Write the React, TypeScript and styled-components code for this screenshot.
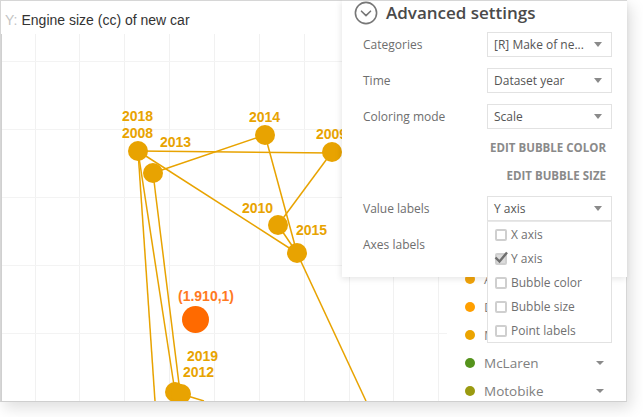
import React from "react";
import styled, { createGlobalStyle } from "styled-components";

const Global = createGlobalStyle`
  html, body { margin: 0; padding: 0; background: #fff; }
  body { width: 643px; height: 417px; overflow: hidden; font-family: "Open Sans", sans-serif; }
`;

const Card = styled.div`
  position: relative;
  box-sizing: border-box;
  width: 627px;
  height: 402px;
  display: flex;
  flex-direction: column;
  background: #fff;
  border-top: 1px solid #d6d6d6;
  border-left: 1px solid #d6d6d6;
  border-right: 1px solid #d6d6d6;
  border-bottom: 1px solid #cfcfcf;
  box-shadow: 4px 6px 14px rgba(0, 0, 0, 0.13);
`;

const AxisTitle = styled.div`
  height: 33px;
  display: flex;
  align-items: center;
  gap: 4px;
  padding: 4px 0 0 4px;
  box-sizing: border-box;
  font: 14px "Liberation Sans", Arial, sans-serif;
  color: #333;
`;

const AxisPrefix = styled.span`
  color: #c4c4c4;
`;

const ChartBody = styled.div`
  flex: 1;
  display: flex;
  min-height: 0;
  border-left: 1px solid #d0d0d0;
`;

const Plot = styled.svg`
  display: block;
  width: 445px;
  height: 367px;
  flex: none;
`;

const Legend = styled.div`
  flex: 1;
  display: flex;
  flex-direction: column;
  justify-content: flex-end;
  margin-bottom: -4px;
`;

const LegendRow = styled.div`
  height: 28px;
  display: flex;
  align-items: center;
  padding-left: 18px;
  font-size: 13.5px;
  color: #808080;
`;

const Dot = styled.span<{ $color: string }>`
  width: 10px;
  height: 10px;
  border-radius: 50%;
  background: ${(p) => p.$color};
  margin-right: 9px;
  flex: none;
`;

const LegendName = styled.span`
  flex: 1;
`;

const LegendCaret = styled.span`
  width: 0;
  height: 0;
  border-left: 4px solid transparent;
  border-right: 4px solid transparent;
  border-top: 4px solid #8a8a8a;
  margin-right: 22px;
`;

const Panel = styled.div`
  position: absolute;
  top: -1px;
  right: -1px;
  width: 285px;
  height: 277px;
  box-sizing: border-box;
  background: #fff;
  padding-left: 21px;
  border-top: 1px solid #d6d6d6;
  box-shadow: -1px 2px 6px rgba(0, 0, 0, 0.1);
`;

const PanelHeader = styled.div`
  height: 23px;
  display: flex;
  align-items: center;
  gap: 8px;
  margin: 0 0 8px -9px;
  font-size: 17px;
  font-weight: 600;
  color: #4a4a4a;
`;

const Row = styled.div`
  position: relative;
  display: flex;
  align-items: center;
  height: 25px;
  margin-bottom: 11px;
  font-size: 12px;
  color: #6e6e6e;
`;

const RowLabel = styled.span`
  width: 124px;
  flex: none;
  margin-top: -1px;
`;

const Select = styled.div`
  box-sizing: border-box;
  width: 125px;
  height: 25px;
  display: flex;
  align-items: center;
  justify-content: space-between;
  padding: 0 9px 0 6px;
  border: 1px solid #e2e2e2;
  font-size: 12px;
  color: #555;
`;

const SelectCaret = styled.span`
  width: 0;
  height: 0;
  border-left: 4.5px solid transparent;
  border-right: 4.5px solid transparent;
  border-top: 5px solid #8a8a8a;
`;

const EditLink = styled.div<{ $last?: boolean }>`
  height: 28px;
  line-height: 28px;
  margin: ${(p) => (p.$last ? "0 21px 6px 0" : "-6px 21px 0 0")};
  text-align: right;
  font-size: 11.5px;
  font-weight: 700;
  color: #8a8a8a;
`;

const Menu = styled.div`
  position: absolute;
  top: 25px;
  left: 124px;
  z-index: 2;
  box-sizing: border-box;
  width: 125px;
  height: 122px;
  background: #fff;
  border: 1px solid #e2e2e2;
  border-top: 1px solid #e8e8e8;
`;

const MenuItem = styled.div`
  height: 24px;
  display: flex;
  align-items: center;
  gap: 4px;
  padding-left: 7px;
  font-size: 12px;
  color: #707070;
`;

const Check = styled.span<{ $on?: boolean }>`
  position: relative;
  box-sizing: border-box;
  width: 12px;
  height: 12px;
  flex: none;
  border: 2px solid #cfcfcf;
  border-radius: 2px;
  margin-top: 2px;
  background: ${(p) => (p.$on ? "#dcdcdc" : "#fff")};
`;

const CheckMark = styled.svg`
  position: absolute;
  left: -3px;
  top: -5px;
  width: 15px;
  height: 15px;
`;

const ORANGE = "#e8a301";

const points: [number, number][] = [
  [138, 151], [153, 173], [265, 135], [332, 152], [278, 225], [297, 253], [175, 392], [181, 394],
];

const segments: [number, number, number, number][] = [
  [138, 151, 332, 153],
  [153, 173, 265, 135],
  [138, 151, 297, 253],
  [265, 135, 297, 253],
  [332, 152, 278, 225],
  [278, 225, 297, 253],
  [297, 253, 366, 401],
  [138, 151, 155, 401],
  [138, 151, 175, 392],
  [153, 173, 180, 392],
  [181, 394, 204, 401],
];

const labels: [string, number, number][] = [
  ["2018", 122, 121],
  ["2008", 122, 138],
  ["2013", 160, 147],
  ["2014", 249, 122],
  ["2009", 316, 139],
  ["2010", 242, 213],
  ["2015", 296, 235],
  ["2019", 187, 361],
  ["2012", 183, 377],
];

const vLines = [35, 79, 124, 169, 214, 259, 304, 349, 393, 438];
const hLines = [61, 129, 197, 265, 333];

const legend = [
  { name: "A", color: "#f0a30a" },
  { name: "D", color: "#ff9f00" },
  { name: "M", color: "#eba400" },
  { name: "McLaren", color: "#55931c" },
  { name: "Motobike", color: "#9a9a10" },
];

const menuItems = ["X axis", "Y axis", "Bubble color", "Bubble size", "Point labels"];

export default function App() {
  return (
    <>
      <Global />
      <Card>
        <AxisTitle>
          <AxisPrefix>Y:</AxisPrefix>
          <span>Engine size (cc) of new car</span>
        </AxisTitle>
        <ChartBody>
          <Plot viewBox="2 34 445 367">
            {vLines.map((x) => (
              <line key={x} x1={x + 0.5} x2={x + 0.5} y1={34} y2={401} stroke="#f1f1f1" />
            ))}
            {hLines.map((y) => (
              <line key={y} x1={2} x2={447} y1={y + 0.5} y2={y + 0.5} stroke="#f3f3f3" />
            ))}
            {segments.map(([a, b, c, d], i) => (
              <line key={i} x1={a} y1={b} x2={c} y2={d} stroke={ORANGE} strokeWidth={1.5} />
            ))}
            {points.map(([x, y]) => (
              <circle key={`${x}-${y}`} cx={x} cy={y} r={10} fill={ORANGE} />
            ))}
            <circle cx={195.5} cy={319.5} r={13.5} fill="#ff6a00" />
            <g fontFamily="'Liberation Sans', Arial, sans-serif" fontWeight={700} fontSize={14} fill={ORANGE}>
              {labels.map(([t, x, y]) => (
                <text key={t} x={x} y={y}>{t}</text>
              ))}
            </g>
            <text x={178} y={301} fontFamily="'Liberation Sans', Arial, sans-serif" fontWeight={700} fontSize={14} fill="#ff7a1f">
              (1.910,1)
            </text>
          </Plot>
          <Legend>
            {legend.map((l) => (
              <LegendRow key={l.name}>
                <Dot $color={l.color} />
                <LegendName>{l.name}</LegendName>
                <LegendCaret />
              </LegendRow>
            ))}
          </Legend>
        </ChartBody>
        <Panel>
          <PanelHeader>
            <svg width="24" height="24" viewBox="0 0 24 24" fill="none" stroke="#777" strokeWidth="1.6">
              <circle cx="12" cy="12" r="10.6" />
              <path d="M7.5 10.2 12 14.6l4.5-4.4" strokeLinecap="round" strokeLinejoin="round" />
            </svg>
            Advanced settings
          </PanelHeader>
          <Row>
            <RowLabel>Categories</RowLabel>
            <Select>[R] Make of ne...<SelectCaret /></Select>
          </Row>
          <Row>
            <RowLabel>Time</RowLabel>
            <Select>Dataset year<SelectCaret /></Select>
          </Row>
          <Row>
            <RowLabel>Coloring mode</RowLabel>
            <Select>Scale<SelectCaret /></Select>
          </Row>
          <EditLink>EDIT BUBBLE COLOR</EditLink>
          <EditLink $last>EDIT BUBBLE SIZE</EditLink>
          <Row>
            <RowLabel>Value labels</RowLabel>
            <Select>Y axis<SelectCaret /></Select>
            <Menu>
              {menuItems.map((m) => (
                <MenuItem key={m}>
                  <Check $on={m === "Y axis"}>
                    {m === "Y axis" && (
                      <CheckMark viewBox="0 0 15 15" fill="none" stroke="#6f6f6f" strokeWidth="2.4">
                        <path d="M1.5 7.5 5.5 11.5 13 2.5" />
                      </CheckMark>
                    )}
                  </Check>
                  {m}
                </MenuItem>
              ))}
            </Menu>
          </Row>
          <Row>
            <RowLabel>Axes labels</RowLabel>
          </Row>
        </Panel>
      </Card>
    </>
  );
}
